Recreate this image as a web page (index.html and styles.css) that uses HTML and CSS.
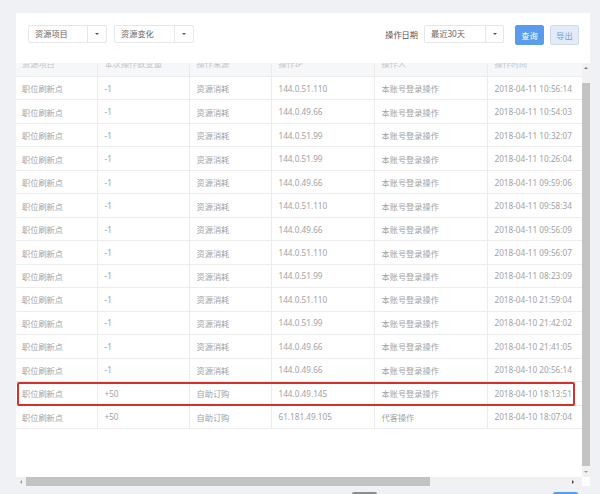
FILE: index.html
```html
<!DOCTYPE html>
<html lang="zh">
<head>
<meta charset="utf-8">
<link rel="stylesheet" href="styles.css">
</head>
<body>
<div class="panel">
  <div class="filters">
    <div class="select w79"><span class="sel-text">资源项目</span><span class="sel-arrow"></span></div>
    <div class="select w80"><span class="sel-text">资源变化</span><span class="sel-arrow"></span></div>
    <div class="spacer"></div>
    <span class="label">操作日期</span>
    <div class="select w80 a17"><span class="sel-text">最近30天</span><span class="sel-arrow"></span></div>
    <button class="btn primary">查询</button>
    <button class="btn light">导出</button>
  </div>
  <div class="table-wrap">
    <div class="viewport">
      <div class="grid">
        <div class="row head"><div>资源项目</div><div>本次操作数变量</div><div>操作来源</div><div>操作IP</div><div>操作人</div><div>操作时间</div><div></div></div>
        <div class="row"><div>职位刷新点</div><div>-1</div><div>资源消耗</div><div>144.0.51.110</div><div>本账号登录操作</div><div>2018-04-11 10:56:14</div><div></div></div>
        <div class="row"><div>职位刷新点</div><div>-1</div><div>资源消耗</div><div>144.0.49.66</div><div>本账号登录操作</div><div>2018-04-11 10:54:03</div><div></div></div>
        <div class="row"><div>职位刷新点</div><div>-1</div><div>资源消耗</div><div>144.0.51.99</div><div>本账号登录操作</div><div>2018-04-11 10:32:07</div><div></div></div>
        <div class="row"><div>职位刷新点</div><div>-1</div><div>资源消耗</div><div>144.0.51.99</div><div>本账号登录操作</div><div>2018-04-11 10:26:04</div><div></div></div>
        <div class="row"><div>职位刷新点</div><div>-1</div><div>资源消耗</div><div>144.0.49.66</div><div>本账号登录操作</div><div>2018-04-11 09:59:06</div><div></div></div>
        <div class="row"><div>职位刷新点</div><div>-1</div><div>资源消耗</div><div>144.0.51.110</div><div>本账号登录操作</div><div>2018-04-11 09:58:34</div><div></div></div>
        <div class="row"><div>职位刷新点</div><div>-1</div><div>资源消耗</div><div>144.0.49.66</div><div>本账号登录操作</div><div>2018-04-11 09:56:09</div><div></div></div>
        <div class="row"><div>职位刷新点</div><div>-1</div><div>资源消耗</div><div>144.0.51.110</div><div>本账号登录操作</div><div>2018-04-11 09:56:07</div><div></div></div>
        <div class="row"><div>职位刷新点</div><div>-1</div><div>资源消耗</div><div>144.0.51.99</div><div>本账号登录操作</div><div>2018-04-11 08:23:09</div><div></div></div>
        <div class="row"><div>职位刷新点</div><div>-1</div><div>资源消耗</div><div>144.0.51.110</div><div>本账号登录操作</div><div>2018-04-10 21:59:04</div><div></div></div>
        <div class="row"><div>职位刷新点</div><div>-1</div><div>资源消耗</div><div>144.0.51.99</div><div>本账号登录操作</div><div>2018-04-10 21:42:02</div><div></div></div>
        <div class="row"><div>职位刷新点</div><div>-1</div><div>资源消耗</div><div>144.0.49.66</div><div>本账号登录操作</div><div>2018-04-10 21:41:05</div><div></div></div>
        <div class="row"><div>职位刷新点</div><div>-1</div><div>资源消耗</div><div>144.0.49.66</div><div>本账号登录操作</div><div>2018-04-10 20:56:14</div><div></div></div>
        <div class="row"><div>职位刷新点</div><div>+50</div><div>自助订购</div><div>144.0.49.145</div><div>本账号登录操作</div><div>2018-04-10 18:13:51</div><div></div></div>
        <div class="row"><div>职位刷新点</div><div>+50</div><div>自助订购</div><div>61.181.49.105</div><div>代客操作</div><div>2018-04-10 18:07:04</div><div></div></div>
      </div>
      <div class="highlight"></div>
    </div>
    <div class="vscroll">
      <span class="arr up"></span>
      <span class="vthumb"></span>
      <span class="arr down"></span>
    </div>
    <div class="hscroll">
      <span class="arr left"></span>
      <span class="hthumb"></span>
      <span class="htrack"></span>
      <span class="arr right"></span>
    </div>
    <div class="corner"></div>
  </div>
</div>
<div class="below">
  <span class="peek grey"></span>
  <span class="peek blue"></span>
</div>
</body>
</html>
```

FILE: styles.css
```css
html, body {
  margin: 0;
  padding: 0;
  background: #eff1f5;
  font-family: "Noto Sans", "Noto Sans CJK SC", sans-serif;
  font-size: 8.2px;
  overflow: hidden;
}

.panel {
  margin: 13px 0 0 16px;
  width: 574px;
  height: 473px;
  background: #fff;
  display: flex;
  flex-direction: column;
}

.filters {
  height: 50px;
  box-sizing: border-box;
  padding: 12px 11px 0 12px;
  display: flex;
  align-items: flex-start;
  flex-shrink: 0;
}

.select {
  height: 18px;
  box-sizing: border-box;
  border: 1px solid #e4e6ea;
  border-radius: 2px;
  display: flex;
  margin-right: 7px;
  color: #666;
}
.w79 { width: 79px; }
.w80 { width: 80px; }
.sel-text {
  flex: 1;
  padding-left: 6px;
  line-height: 16px;
  white-space: nowrap;
}
.sel-arrow {
  width: 18px;
  border-left: 1px solid #e4e6ea;
  display: flex;
  align-items: center;
  justify-content: center;
}
.a17 .sel-arrow { width: 17px; }
.sel-arrow::after {
  content: "";
  border-left: 2px solid transparent;
  border-right: 2px solid transparent;
  border-top: 2px solid #555;
}

.spacer { flex: 1; }

.label {
  color: #555;
  line-height: 20px;
  margin-right: 6px;
  white-space: nowrap;
}

.btn {
  width: 29px;
  height: 20px;
  padding: 0;
  margin-left: 4px;
  border-radius: 2px;
  font-family: inherit;
  font-size: 8.2px;
  box-sizing: border-box;
}
.btn.primary {
  margin-left: 4px;
  background: #5a9bed;
  border: 1px solid #5a9bed;
  color: #fff;
}
.btn.light {
  margin-left: 6px;
  background: #e3ebf7;
  border: 1px solid #cfdcf0;
  color: #6f9ee0;
}

.table-wrap {
  flex: 1;
  display: grid;
  grid-template-columns: 566px 8px;
  grid-template-rows: 414px 9px;
  overflow: hidden;
}

.viewport {
  position: relative;
  overflow: hidden;
}

.grid {
  width: 760px;
  margin-top: -14px;
  color: #a2a2a2;
}

.row {
  display: grid;
  grid-template-columns: 82px 92px 82px 103px 113px 140px 148px;
  height: 23.47px;
  box-sizing: border-box;
  border-bottom: 1px solid #ececec;
}
.row > div {
  border-right: 1px solid #ececec;
  padding-left: 6.5px;
  display: flex;
  align-items: center;
  white-space: nowrap;
  overflow: hidden;
}
.row > div:first-child { padding-left: 6px; }
.row.head {
  height: 28px;
  background: #f6f7f9;
  color: #c4c4c4;
}

.highlight {
  position: absolute;
  left: 1px;
  top: 319px;
  width: 558px;
  height: 24px;
  box-sizing: border-box;
  border: 2px solid #d4302e;
  border-radius: 2px;
}

.vscroll {
  background: #f1f1f1;
  display: flex;
  flex-direction: column;
  align-items: center;
}
.vthumb {
  width: 8px;
  height: 383px;
  margin-top: 10px;
  background: #c3c3c3;
}
.hscroll {
  background: #f1f1f1;
  display: flex;
  align-items: center;
}
.hthumb {
  width: 404px;
  height: 9px;
  background: #c3c3c3;
}
.htrack { flex: 1; }
.corner { background: #fff; }

.arr {
  width: 10px;
  height: 10px;
  display: flex;
  align-items: center;
  justify-content: center;
  flex-shrink: 0;
}
.arr::after { content: ""; }
.up::after {
  border-left: 2px solid transparent;
  border-right: 2px solid transparent;
  border-bottom: 2px solid #777;
}
.down { margin-top: 1px; }
.down::after {
  border-left: 2px solid transparent;
  border-right: 2px solid transparent;
  border-top: 2px solid #999;
}
.left::after {
  border-top: 2px solid transparent;
  border-bottom: 2px solid transparent;
  border-right: 2px solid #999;
}
.right { margin-right: 4px; }
.right::after {
  border-top: 2px solid transparent;
  border-bottom: 2px solid transparent;
  border-left: 2px solid #444;
}

.below {
  display: flex;
  padding: 6px 0 0 352px;
}
.peek {
  width: 25px;
  height: 4px;
  border-radius: 2px 2px 0 0;
}
.peek.grey { background: #8a8c90; }
.peek.blue { background: #5a9bed; margin-left: 176px; }
```
